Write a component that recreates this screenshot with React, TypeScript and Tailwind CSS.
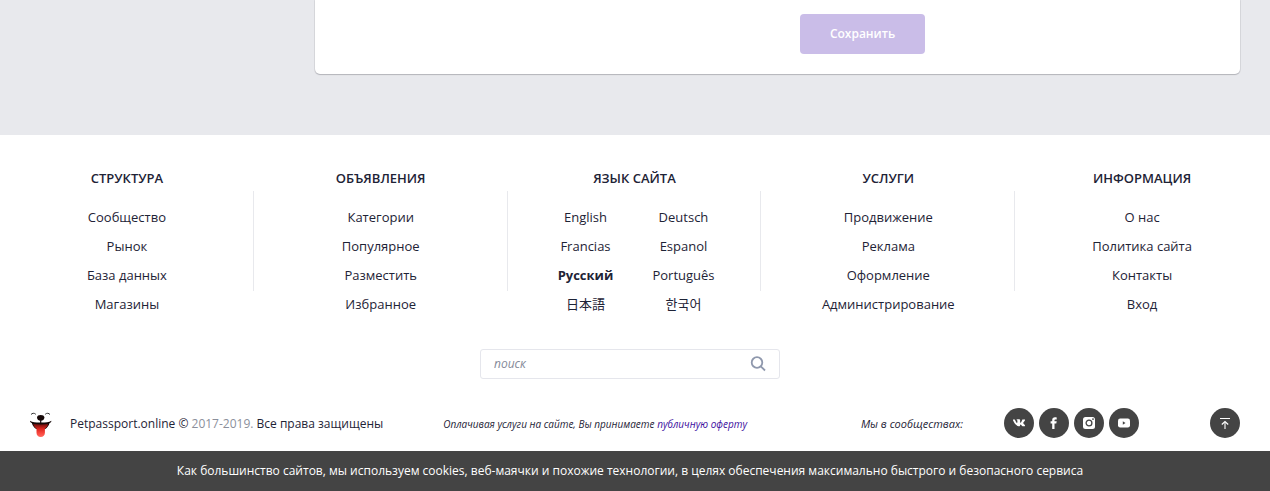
import React from "react";

type LinkItem = { label: string; active?: boolean };
type Column = { title: string; links: LinkItem[]; split?: boolean };

const columns: Column[] = [
  {
    title: "Структура",
    links: [{ label: "Сообщество" }, { label: "Рынок" }, { label: "База данных" }, { label: "Магазины" }],
  },
  {
    title: "Объявления",
    links: [{ label: "Категории" }, { label: "Популярное" }, { label: "Разместить" }, { label: "Избранное" }],
  },
  {
    title: "Язык сайта",
    split: true,
    links: [
      { label: "English" },
      { label: "Deutsch" },
      { label: "Francias" },
      { label: "Espanol" },
      { label: "Русский", active: true },
      { label: "Português" },
      { label: "日本語" },
      { label: "한국어" },
    ],
  },
  {
    title: "Услуги",
    links: [{ label: "Продвижение" }, { label: "Реклама" }, { label: "Оформление" }, { label: "Администрирование" }],
  },
  {
    title: "Информация",
    links: [{ label: "О нас" }, { label: "Политика сайта" }, { label: "Контакты" }, { label: "Вход" }],
  },
];

function DogLogo() {
  return (
    <svg width="22" height="26" viewBox="0 0 22 26" aria-hidden="true">
      <defs>
        <linearGradient id="tongue" x1="0" y1="0" x2="0" y2="1">
          <stop offset="0" stopColor="#6a0d0a" />
          <stop offset="0.35" stopColor="#d8231c" />
          <stop offset="0.7" stopColor="#f8463d" />
          <stop offset="1" stopColor="#ff6a60" />
        </linearGradient>
      </defs>
      <path d="M1 2.600C2 1 4.400.8 5.800 2.300M15.200 2.300c1.400-1.500 3.800-1.300 4.800.3" fill="none" stroke="#333" strokeWidth="1" />
      <path d="M7 5.600c0-1.900 1.600-2.600 3.700-2.600s3.700.7 3.700 2.600c0 1.800-1.700 3.400-3.700 3.400S7 7.400 7 5.600z" fill="#160808" />
      <path d="M10.700 8.500v3.500" stroke="#160808" strokeWidth="1.200" />
      <path d="M0 8.700c2.600 1.600 6.600 1.900 10.700 1.800 4.100.1 8.100-.2 10.700-1.800-.1 1.500-.8 1.900-1.800 2.400-.9 2.900-2.300 4.700-4.400 5.900H6.200C4.100 15.800 2.700 14 1.800 11.100.8 10.600.1 10.200 0 8.700z" fill="#160808" />
      <path d="M3.200 12c4.500.6 10.500.6 15 0-.6 2-1.800 3.500-3.300 4.600v4.200c0 2.700-1.700 4.200-4.200 4.200s-4.200-1.500-4.200-4.200v-4.200C5 15.500 3.800 14 3.200 12z" fill="url(#tongue)" />
    </svg>
  );
}

function VkIcon() {
  return (
    <svg width="12" height="8" viewBox="0 0 12 8" fill="#fff" aria-hidden="true">
      <path d="M5.700 7.200h.8s.3 0 .4-.2c.1-.1.100-.4.100-.4s0-1 .5-1.200c.4-.1 1 1 1.600 1.500.5.3.8.3.8.3h1.600s.9-.1.500-.8c0-.1-.3-.6-1.200-1.500-1-1-.8-.8.4-2.400C11.900 1.500 12.200.9 12.100.7 12 .4 11.500.5 11.500.5H9.700s-.200 0-.3.1c-.1.1-.2.300-.2.300s-.3.800-.7 1.500c-.8 1.300-1.100 1.400-1.200 1.300-.3-.2-.2-.8-.2-1.200 0-1.300.2-1.900-.4-2C6.500.400 6.300.300 5.700.3c-.8 0-1.500 0-1.900.2-.2.1-.4.400-.3.400.200 0 .5.100.7.3.2.300.200 1 .200 1s.1 1.500-.3 1.700c-.3.100-.6-.1-1.300-1.400C2.400 1.800 2.100 1 2.100 1S2 .8 1.900.7C1.800.6 1.600.5 1.600.5H.3S0 .500-.1.700c-.1.1 0 .3 0 .3s1.300 3.100 2.800 4.600c1.400 1.500 3 1.600 3 1.600z" />
    </svg>
  );
}

function FacebookIcon() {
  return (
    <svg width="8" height="12" viewBox="0 0 8 12" fill="#fff" aria-hidden="true">
      <path d="M2.200 12V6.600H.6V4.300h1.600V3C2.200 1.200 3.300.3 5 .3c.800 0 1.500.1 1.700.1v2.100H5.500c-.8 0-1 .4-1 1v.8h2.200l-.4 2.300H4.500V12z" />
    </svg>
  );
}

function InstagramIcon() {
  return (
    <svg width="12" height="12" viewBox="0 0 12 12" aria-hidden="true">
      <rect width="12" height="12" rx="2.500" fill="#fff" />
      <circle cx="6" cy="6" r="2.900" fill="none" stroke="#444" strokeWidth="1.300" />
      <circle cx="10" cy="2.100" r="0.900" fill="#444" />
    </svg>
  );
}

function YoutubeIcon() {
  return (
    <svg width="12" height="10" viewBox="0 0 12 10" aria-hidden="true">
      <rect y="0.500" width="12" height="9" rx="2.200" fill="#fff" />
      <path d="M4.800 3.300v3.400L7.500 5z" fill="#444" />
    </svg>
  );
}

const socials = [
  { name: "VK", icon: <VkIcon /> },
  { name: "Facebook", icon: <FacebookIcon /> },
  { name: "Instagram", icon: <InstagramIcon /> },
  { name: "YouTube", icon: <YoutubeIcon /> },
];

export default function App() {
  return (
    <div className="bg-white font-['Open_Sans','Noto_Sans_CJK_JP','Noto_Sans_CJK_KR',sans-serif] text-[13px] leading-5 text-[#1e2336]">
      <main className="bg-[#e8e9ed] pr-[30px] pb-[61px] pl-[315px]">
        <section className="rounded-b-[5px] bg-white pt-[14px] pb-5 pl-[485px] shadow-[0_1px_1px_#b4b5bb,0_0_0_1px_#d9dade]">
          <button
            type="button"
            className="block h-10 w-[125px] rounded-[4px] bg-[#cabde8] text-xs font-semibold text-white"
          >
            Сохранить
          </button>
        </section>
      </main>

      <footer>
        <nav className="grid grid-cols-5 pt-[33px] pr-px">
          {columns.map((column) => (
            <div key={column.title} className="relative text-center">
              <h2 className="font-semibold uppercase">{column.title}</h2>
              <ul className={column.split ? "mx-auto mt-[15px] grid w-[196px] grid-cols-2" : "mt-[15px]"}>
                {column.links.map((link) => (
                  <li key={link.label} className="h-[29px] leading-[29px]">
                    <a href="#" className={link.active ? "font-bold" : ""}>
                      {link.label}
                    </a>
                  </li>
                ))}
              </ul>
              {column !== columns[columns.length - 1] && (
                <span className="absolute top-[23px] right-0 h-[100px] w-px bg-[#e8e9ed]" />
              )}
            </div>
          ))}
        </nav>

        <form role="search" className="mt-[30px] flex justify-center pr-[10px]">
          <div className="flex h-[30px] w-[300px] items-center rounded-[3px] border border-[#e5e6ec] px-[13px]">
            <input
              type="text"
              aria-label="поиск"
              placeholder="поиск"
              className="min-w-0 flex-1 text-xs italic outline-none placeholder:text-[#858a99]"
            />
            <button type="button" aria-label="Найти">
              <svg width="16" height="16" viewBox="0 0 16 16" fill="none" stroke="#8f98ad" strokeWidth="1.800" aria-hidden="true">
                <circle cx="7" cy="6.500" r="5.300" />
                <path d="M10.800 10.300l4.200 4.200" />
              </svg>
            </button>
          </div>
        </form>

        <div className="mt-[29px] flex h-[30px] items-center px-[30px]">
          <a href="#" aria-label="Petpassport.online" className="mr-[18px] pt-1">
            <DogLogo />
          </a>
          <p className="pt-[2px] text-xs">
            Petpassport.online © <span className="text-[#8b8f9b]">2017-2019.</span> Все права защищены
          </p>
          <p className="ml-[60px] pt-[2px] text-[10px] italic">
            Оплачивая услуги на сайте, Вы принимаете{" "}
            <a href="#" className="text-[#3d0e9e]">
              публичную оферту
            </a>
          </p>
          <div className="ml-auto flex items-center">
            <p className="mr-[41px] pt-[2px] text-[11px] italic">Мы в сообществах:</p>
            <div className="flex gap-[5px]">
              {socials.map((social) => (
                <a
                  key={social.name}
                  href="#"
                  aria-label={social.name}
                  className="flex size-[30px] items-center justify-center rounded-full bg-[#444]"
                >
                  {social.icon}
                </a>
              ))}
            </div>
            <button
              type="button"
              aria-label="Наверх"
              className="ml-[71px] flex size-[30px] items-center justify-center rounded-full bg-[#444]"
            >
              <svg width="10" height="12" viewBox="0 0 10 12" fill="none" aria-hidden="true">
                <path d="M0 1.500h10" stroke="#fff" />
                <path d="M5 12V5" stroke="#ccc" strokeWidth="1.500" />
                <path d="M1.800 7.500L5 4.500l3.200 3" stroke="#fff" strokeWidth="1.200" />
              </svg>
            </button>
          </div>
        </div>
      </footer>

      <div className="mt-[13px] bg-[#444] py-[10px] pr-[10px] text-center text-xs leading-5 text-white">
        Как большинство сайтов, мы используем cookies, веб-маячки и похожие технологии, в целях обеспечения
        максимально быстрого и безопасного сервиса
      </div>
    </div>
  );
}
